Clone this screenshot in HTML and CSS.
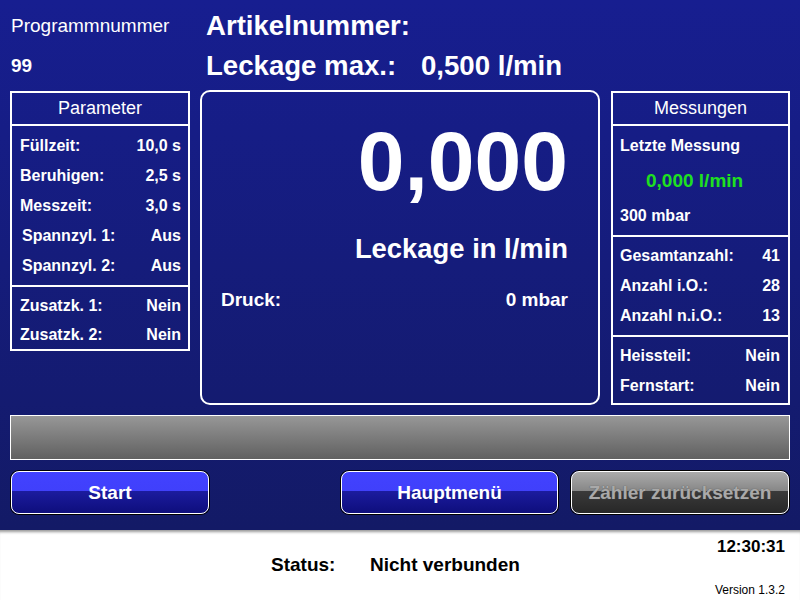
FILE: index.html
```html
<!DOCTYPE html>
<html lang="de">
<head>
  <meta charset="UTF-8">
  <title>Dichtheitsprüfung</title>
  <link rel="stylesheet" href="styles.css">
</head>
<body>
  <div class="main">
    <div class="head">
      <div class="prog">
        <div class="prog-label">Programmnummer</div>
        <div class="prog-value">99</div>
      </div>
      <div class="article">
        <div class="article-line">Artikelnummer:</div>
        <div class="article-line"><span class="article-key">Leckage max.:</span>0,500 l/min</div>
      </div>
    </div>

    <div class="panels">
      <div class="box box-param">
        <div class="box-title">Parameter</div>
        <div class="box-section sec-param1">
          <div class="row"><span>Füllzeit:</span><span>10,0 s</span></div>
          <div class="row"><span>Beruhigen:</span><span>2,5 s</span></div>
          <div class="row"><span>Messzeit:</span><span>3,0 s</span></div>
          <div class="row"><span class="indent">Spannzyl. 1:</span><span>Aus</span></div>
          <div class="row"><span class="indent">Spannzyl. 2:</span><span>Aus</span></div>
        </div>
        <div class="box-section sec-param2">
          <div class="row row-29"><span>Zusatzk. 1:</span><span>Nein</span></div>
          <div class="row row-29"><span>Zusatzk. 2:</span><span>Nein</span></div>
        </div>
      </div>

      <div class="display">
        <div class="big-value">0,000</div>
        <div class="big-unit">Leckage in l/min</div>
        <div class="pressure"><span>Druck:</span><span>0 mbar</span></div>
      </div>

      <div class="box box-mess">
        <div class="box-title">Messungen</div>
        <div class="box-section sec-last">
          <div class="row row-35"><span>Letzte Messung</span></div>
          <div class="row row-35 last-value"><span>0,000 l/min</span></div>
          <div class="row row-35"><span>300 mbar</span></div>
        </div>
        <div class="box-section sec-count">
          <div class="row"><span>Gesamtanzahl:</span><span>41</span></div>
          <div class="row"><span>Anzahl i.O.:</span><span>28</span></div>
          <div class="row"><span>Anzahl n.i.O.:</span><span>13</span></div>
        </div>
        <div class="box-section sec-flags">
          <div class="row"><span>Heissteil:</span><span>Nein</span></div>
          <div class="row"><span>Fernstart:</span><span>Nein</span></div>
        </div>
      </div>
    </div>

    <div class="progress"></div>

    <div class="buttons">
      <button class="btn btn-start">Start</button>
      <button class="btn btn-menu">Hauptmenü</button>
      <button class="btn btn-reset" disabled>Zähler zurücksetzen</button>
    </div>
  </div>

  <div class="footer">
    <div class="clock">12:30:31</div>
    <div class="status"><span class="status-key">Status:</span>Nicht verbunden</div>
    <div class="version">Version 1.3.2</div>
  </div>
</body>
</html>
```

FILE: styles.css
```css
body {
  margin: 0;
  padding: 0;
  width: 800px;
  height: 600px;
  overflow: hidden;
  font-family: "Liberation Sans", Arial, sans-serif;
  color: #fff;
  background: #fff;
}
.main {
  height: 530px;
  box-sizing: border-box;
  padding: 0 10px;
  background: linear-gradient(#171e90, #131a66);
}

/* top lines */
.head {
  height: 90px;
  box-sizing: border-box;
  padding: 6px 0 0 1px;
  display: grid;
  grid-template-columns: 195px 1fr;
}
.prog-label {
  font-size: 19px;
  line-height: 40px;
}
.prog-value {
  font-size: 19px;
  font-weight: bold;
  line-height: 40px;
}
.article-line {
  font-size: 27.6px;
  font-weight: bold;
  line-height: 40px;
  white-space: nowrap;
}
.article-key {
  display: inline-block;
  width: 215px;
}

/* three panels */
.panels {
  display: grid;
  grid-template-columns: 180px 400px 1fr;
  column-gap: 10px;
  align-items: start;
}
.box {
  margin-top: 1px;
  border: 2px solid #fff;
}
.box-mess {
  margin-left: 1px;
}
.box-title {
  height: 31px;
  line-height: 31px;
  text-align: center;
  font-size: 18px;
  border-bottom: 2px solid #fff;
}
.box-section {
  font-size: 16px;
  font-weight: bold;
}
.box-section + .box-section {
  border-top: 2px solid #fff;
}
.sec-param1 { padding: 5px 7px 4px 8px; }
.sec-param2 { padding: 4px 7px 0 8px; }
.sec-last { padding: 2px 8px 2px 7px; }
.sec-count { padding: 4px 8px 4px 7px; }
.sec-flags { padding: 4px 8px 2px 7px; }
.row {
  display: flex;
  justify-content: space-between;
  line-height: 30px;
  white-space: nowrap;
}
.row-29 { line-height: 29px; }
.row-35 { line-height: 35px; }
.indent { padding-left: 2px; }
.last-value {
  padding-left: 26px;
  font-size: 19px;
  color: #1fe01f;
}

/* centre display */
.display {
  height: 315px;
  box-sizing: border-box;
  border: 2px solid #fff;
  border-radius: 10px;
  padding: 20px 30px 0 19px;
  font-weight: bold;
}
.big-value {
  font-size: 84px;
  line-height: 98px;
  text-align: right;
}
.big-unit {
  margin-top: 19px;
  font-size: 27.4px;
  line-height: 40px;
  text-align: right;
}
.pressure {
  margin-top: 16px;
  display: flex;
  justify-content: space-between;
  font-size: 19px;
  line-height: 30px;
}

/* progress bar */
.progress {
  margin-top: 10px;
  height: 43px;
  border: 1px solid #fff;
  background: linear-gradient(#979797, #606060);
}

/* buttons */
.buttons {
  margin-top: 11px;
  display: flex;
}
.btn {
  height: 43px;
  border: 1px solid #fff;
  border-radius: 8px;
  box-shadow: 0 0 0 1px #000;
  font-family: "Liberation Sans", Arial, sans-serif;
  font-size: 19px;
  font-weight: bold;
  color: #fff;
  padding: 0;
  background: linear-gradient(#4242ff 0, #4040fb 47%, #1b1b9e 47%, #0e0e7c 100%);
}
.btn-start {
  width: 198px;
  margin-left: 1px;
}
.btn-menu {
  width: 217px;
  margin-left: 132px;
}
.btn-reset {
  width: 218px;
  margin-left: 13px;
  color: #a9a9a9;
  text-shadow: 0 0 1px #4a4a4a;
  background: linear-gradient(#ababab 0, #868686 47%, #3a3a3a 47%, #272727 100%);
}

/* status footer */
.footer {
  height: 70px;
  box-sizing: border-box;
  padding: 8px 15px 0;
  color: #000;
  box-shadow: inset 0 4px 3px -2px #9a9a9a;
}
.clock {
  text-align: right;
  font-size: 17px;
  font-weight: bold;
  line-height: 18px;
}
.status {
  margin-top: -3px;
  padding-left: 256px;
  font-size: 19px;
  font-weight: bold;
  line-height: 24px;
}
.status-key {
  display: inline-block;
  width: 99px;
}
.version {
  margin-top: 5px;
  text-align: right;
  font-size: 12px;
  line-height: 16px;
}
```
